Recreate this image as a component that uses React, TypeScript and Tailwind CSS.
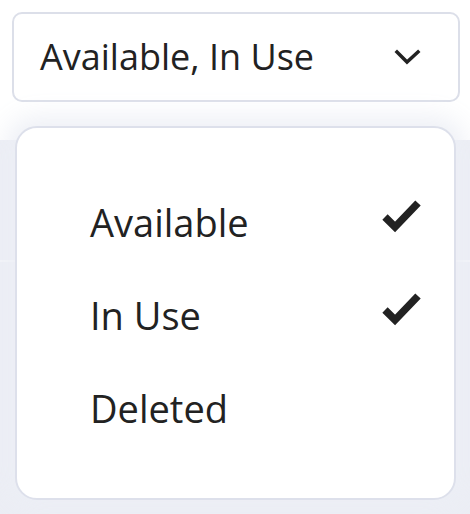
import { useState } from "react";

const options = [
  { label: "Available", checked: true },
  { label: "In Use", checked: true },
  { label: "Deleted", checked: false },
];

function CheckMark() {
  return (
    <svg width="44" height="38" viewBox="0 0 44 38" className="shrink-0">
      <polyline
        points="6,20 16,30 39,6"
        fill="none"
        stroke="#222222"
        strokeWidth="7.5"
        strokeLinecap="butt"
        strokeLinejoin="miter"
      />
    </svg>
  );
}

export default function App() {
  const [open] = useState(true);

  return (
    <div className="relative w-[470px] h-[514px] overflow-hidden bg-white font-['Open_Sans',sans-serif] text-[#222222]">
      {/* Trigger area */}
      <div className="h-[140px] px-3 pt-3">
        <button className="w-[448px] h-[90px] flex items-center justify-between pl-[26px] pr-[36px] bg-white border-2 border-[#dcdfe9] rounded-[10px]">
          <span className="text-[36px] leading-none">Available, In Use</span>
          <svg width="28" height="18" viewBox="0 0 28 18">
            <polyline
              points="3,4 13,14 24,4"
              fill="none"
              stroke="#222222"
              strokeWidth="3.5"
              strokeLinecap="square"
            />
          </svg>
        </button>
      </div>

      {/* Table behind */}
      <div className="bg-[#eceef5]">
        <div className="h-[122px] border-b-2 border-[#f4f5f9]" />
        <div className="h-[252px]" />
      </div>

      {/* Dropdown menu */}
      {open && (
        <div className="absolute left-[15px] top-[126px] w-[441px] h-[374px] bg-white border-2 border-[#dde0eb] rounded-[22px] shadow-[0_0_24px_10px_rgba(236,238,245,0.9)] pt-[48px] pl-[73px] pr-[31px]">
          {options.map((o) => (
            <div key={o.label} className="h-[93px] flex justify-between">
              <span className="text-[38px] leading-[93px]">{o.label}</span>
              {o.checked && (
                <div className="pt-[21px]">
                  <CheckMark />
                </div>
              )}
            </div>
          ))}
        </div>
      )}
    </div>
  );
}
